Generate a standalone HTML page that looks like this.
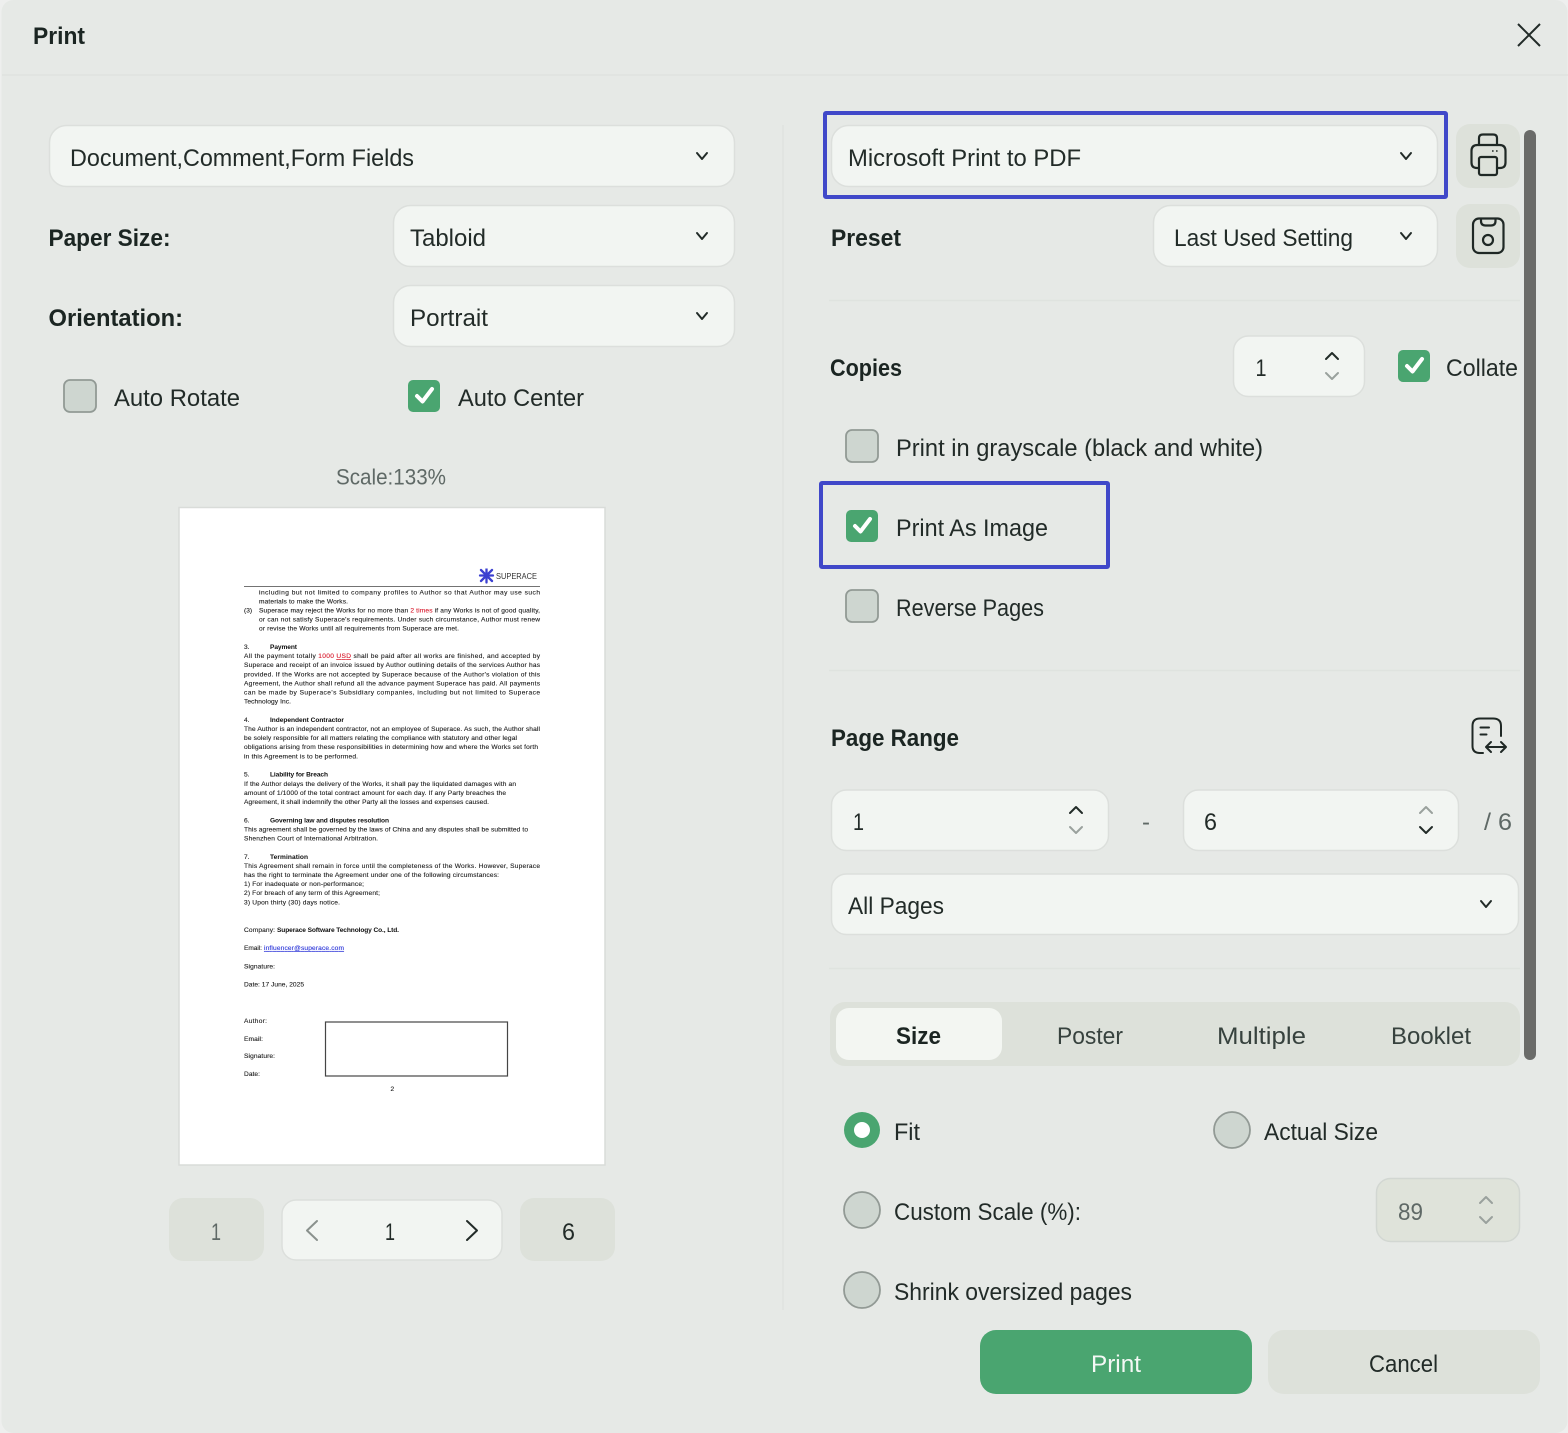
<!DOCTYPE html>
<html lang="en"><head><meta charset="utf-8"><title>Print</title>
<style>
html,body{margin:0;padding:0;width:1568px;height:1433px;overflow:hidden;background:#eeefee}
svg{display:block}
text{font-family:"Liberation Sans",sans-serif}
.t{font-size:24px;fill:#222b28}
.b{font-size:24px;font-weight:700;fill:#1b2522}
.g{font-size:24px;fill:#5f6966}
.d{font-size:6.6px;fill:#1c1c1c;stroke:#1c1c1c;stroke-width:.12}
.db{font-size:6.6px;fill:#111;font-weight:700}
.f{fill:#f2f5f2;stroke:#dcdfdc;stroke-width:1.5}
.bt{fill:#dde1da}
.c{fill:#ced6d0;stroke:#929a95;stroke-width:1.8}
.ck{fill:#4aa570}
.w{fill:none;stroke:#fff;stroke-width:4;stroke-linecap:round;stroke-linejoin:round}
.s{fill:none;stroke:#222b28;stroke-width:2;stroke-linecap:round;stroke-linejoin:round}
.sg{fill:none;stroke:#9aa19d;stroke-width:2;stroke-linecap:round;stroke-linejoin:round}
.i{fill:none;stroke:#1f2825;stroke-width:2.2;stroke-linecap:round;stroke-linejoin:round}
.l{stroke:#dfe3df;stroke-width:1.5}
.bb{fill:none;stroke:#4048c9;stroke-width:4}
</style></head><body>
<svg xmlns="http://www.w3.org/2000/svg" width="1568" height="1433" viewBox="0 0 1568 1433">
<defs><filter id="bl" x="0" y="0" width="1" height="1"><feGaussianBlur stdDeviation="0.3"/></filter></defs>
<rect x="1.5" y="0" width="1566" height="1433" rx="12" fill="#e6e9e6"/>
<line class="l" x1="2" y1="75" x2="1568" y2="75"/>
<line class="l" x1="783" y1="125" x2="783" y2="1310"/>
<text class="b" x="33" y="44" textLength="52" lengthAdjust="spacingAndGlyphs">Print</text>
<path d="M1518 24L1540 46M1540 24L1518 46" fill="none" stroke="#222b28" stroke-width="2"/>

<!-- left fields -->
<rect class="f" x="49.500" y="125.500" width="685" height="61" rx="17"/>
<text class="t" x="70" y="166" textLength="344" lengthAdjust="spacingAndGlyphs">Document,Comment,Form Fields</text>
<path class="s" d="M697 153L702 159L707 153"/>
<text class="b" x="48.500" y="246" textLength="122" lengthAdjust="spacingAndGlyphs">Paper Size:</text>
<rect class="f" x="393.500" y="205.500" width="341" height="61" rx="17"/>
<text class="t" x="410" y="246" textLength="76" lengthAdjust="spacingAndGlyphs">Tabloid</text>
<path class="s" d="M697 233L702 239L707 233"/>
<text class="b" x="48.500" y="326" textLength="134.500" lengthAdjust="spacingAndGlyphs">Orientation:</text>
<rect class="f" x="393.500" y="285.500" width="341" height="61" rx="17"/>
<text class="t" x="410" y="326" textLength="78" lengthAdjust="spacingAndGlyphs">Portrait</text>
<path class="s" d="M697 313L702 319L707 313"/>
<rect class="c" x="64" y="380" width="32" height="32" rx="6"/>
<text class="t" x="114" y="406" textLength="126" lengthAdjust="spacingAndGlyphs">Auto Rotate</text>
<rect class="ck" x="408" y="380" width="32" height="32" rx="5"/>
<path class="w" d="M417 396L422.500 401.500L432 389"/>
<text class="t" x="458" y="406" textLength="126" lengthAdjust="spacingAndGlyphs">Auto Center</text>
<text class="g" x="336" y="484.500" style="font-size:22px" textLength="110" lengthAdjust="spacingAndGlyphs">Scale:133%</text>

<!-- page preview -->
<rect x="179" y="507.500" width="426" height="657.500" fill="#fff" stroke="#d9dcd9" stroke-width="1.500"/>
<g filter="url(#bl)">
<g fill="none" stroke="#3b3fd0" stroke-width="2.300" stroke-linecap="round"><path d="M481 570L492 581M492 570L481 581M486.500 568.500V582.500M480 575.500H493"/></g>
<text x="496" y="579" style="font-size:8px" fill="#333" textLength="41" lengthAdjust="spacingAndGlyphs">SUPERACE</text>
<line x1="244" y1="586.500" x2="540" y2="586.500" stroke="#444" stroke-width=".8"/>
<text class="d" x="259" y="594.300" textLength="281">including but not limited to company profiles to Author so that Author may use such</text>
<text class="d" x="259" y="603.400" textLength="89">materials to make the Works.</text>
<text class="d" x="244" y="612.500">(3)</text>
<text class="d" x="259" y="612.500" textLength="281">Superace may reject the Works for no more than <tspan fill="#d7182a" stroke="#d7182a">2 times</tspan> if any Works is not of good quality,</text>
<text class="d" x="259" y="621.600" textLength="281">or can not satisfy Superace's requirements. Under such circumstance, Author must renew</text>
<text class="d" x="259" y="630.700" textLength="200">or revise the Works until all requirements from Superace are met.</text>
<text class="d" x="244" y="649">3.</text>
<text class="db" x="270" y="649" textLength="27">Payment</text>
<text class="d" x="244" y="658.100" textLength="296">All the payment totally <tspan fill="#d7182a" stroke="#d7182a">1000 <tspan text-decoration="underline">USD</tspan></tspan> shall be paid after all works are finished, and accepted by</text>
<text class="d" x="244" y="667.200" textLength="296">Superace and receipt of an invoice issued by Author outlining details of the services Author has</text>
<text class="d" x="244" y="676.300" textLength="296">provided. If the Works are not accepted by Superace because of the Author's violation of this</text>
<text class="d" x="244" y="685.400" textLength="296">Agreement, the Author shall refund all the advance payment Superace has paid. All payments</text>
<text class="d" x="244" y="694.500" textLength="296">can be made by Superace's Subsidiary companies, including but not limited to Superace</text>
<text class="d" x="244" y="703.600" textLength="47">Technology Inc.</text>
<text class="d" x="244" y="722">4.</text>
<text class="db" x="270" y="722" textLength="74">Independent Contractor</text>
<text class="d" x="244" y="731" textLength="296">The Author is an independent contractor, not an employee of Superace. As such, the Author shall</text>
<text class="d" x="244" y="740.100" textLength="273">be solely responsible for all matters relating the compliance with statutory and other legal</text>
<text class="d" x="244" y="749.200" textLength="294">obligations arising from these responsibilities in determining how and where the Works set forth</text>
<text class="d" x="244" y="758.300" textLength="114">in this Agreement is to be performed.</text>
<text class="d" x="244" y="776.700">5.</text>
<text class="db" x="270" y="776.700" textLength="58">Liability for Breach</text>
<text class="d" x="244" y="785.800" textLength="272">If the Author delays the delivery of the Works, it shall pay the liquidated damages with an</text>
<text class="d" x="244" y="794.900" textLength="262">amount of 1/1000 of the total contract amount for each day. If any Party breaches the</text>
<text class="d" x="244" y="804" textLength="245">Agreement, it shall indemnify the other Party all the losses and expenses caused.</text>
<text class="d" x="244" y="822.300">6.</text>
<text class="db" x="270" y="822.300" textLength="119">Governing law and disputes resolution</text>
<text class="d" x="244" y="831.400" textLength="284">This agreement shall be governed by the laws of China and any disputes shall be submitted to</text>
<text class="d" x="244" y="840.500" textLength="134">Shenzhen Court of International Arbitration.</text>
<text class="d" x="244" y="858.800">7.</text>
<text class="db" x="270" y="858.800" textLength="38">Termination</text>
<text class="d" x="244" y="867.900" textLength="296">This Agreement shall remain in force until the completeness of the Works. However, Superace</text>
<text class="d" x="244" y="877" textLength="255">has the right to terminate the Agreement under one of the following circumstances:</text>
<text class="d" x="244" y="886.100" textLength="120">1) For inadequate or non-performance;</text>
<text class="d" x="244" y="895.200" textLength="136">2) For breach of any term of this Agreement;</text>
<text class="d" x="244" y="904.300" textLength="96">3)  Upon thirty (30) days notice.</text>
<text class="d" x="244" y="932" textLength="31">Company:</text>
<text class="db" x="277" y="932" textLength="122">Superace Software Technology Co., Ltd.</text>
<text class="d" x="244" y="950" textLength="18">Email:</text>
<text class="d" x="264" y="950" textLength="80" style="fill:#2b35d8;stroke:#2b35d8" text-decoration="underline">influencer@superace.com</text>
<text class="d" x="244" y="968.500" textLength="31">Signature:</text>
<text class="d" x="244" y="986.500" textLength="60">Date: 17 June, 2025</text>
<text class="d" x="244" y="1023" textLength="23">Author:</text>
<text class="d" x="244" y="1041" textLength="19">Email:</text>
<text class="d" x="244" y="1058" textLength="31">Signature:</text>
<text class="d" x="244" y="1076" textLength="16">Date:</text>
<rect x="325.500" y="1022" width="182" height="54" fill="#fff" stroke="#444" stroke-width="1.200"/>
<text class="d" x="390.500" y="1091">2</text>
</g>

<!-- pager -->
<rect class="bt" x="169" y="1198" width="95" height="63" rx="14"/>
<text class="g" x="211" y="1240" textLength="10" lengthAdjust="spacingAndGlyphs">1</text>
<rect class="f" x="282" y="1200" width="220" height="60" rx="14"/>
<path class="sg" style="stroke-width:2;stroke:#8a918d" d="M317 1221L307 1230.500L317 1240"/>
<text class="t" x="385" y="1240" textLength="10" lengthAdjust="spacingAndGlyphs">1</text>
<path class="s" d="M467 1221L477 1230.500L467 1240"/>
<rect class="bt" x="520" y="1198" width="95" height="63" rx="14"/>
<text class="t" x="562" y="1240" textLength="13" lengthAdjust="spacingAndGlyphs">6</text>

<!-- right: printer -->
<rect class="f" x="831.500" y="125.500" width="606" height="61" rx="17"/>
<rect class="bb" x="825" y="113" width="621" height="84" rx="1"/>
<text class="t" x="848" y="166" textLength="233" lengthAdjust="spacingAndGlyphs">Microsoft Print to PDF</text>
<path class="s" d="M1401 153L1406 159L1411 153"/>
<rect class="bt" x="1456" y="124" width="64" height="64" rx="14"/>
<path class="i" d="M1479 145V138Q1479 134.500 1483 134.500H1493Q1497 134.500 1497 138V145"/>
<path class="i" d="M1479 168H1477Q1471.500 168 1471.500 162.500V151Q1471.500 145 1477.500 145H1499.500Q1505.500 145 1505.500 151V162.500Q1505.500 168 1500 168H1497"/>
<rect class="i" x="1479" y="157" width="18" height="18" rx="2"/>
<path d="M1492 151h1.600M1496 151h1.600" stroke="#1f2825" stroke-width="1.600" fill="none"/>

<text class="b" x="831" y="246" textLength="70" lengthAdjust="spacingAndGlyphs">Preset</text>
<rect class="f" x="1153.500" y="205.500" width="284" height="61" rx="17"/>
<text class="t" x="1174" y="246" textLength="179" lengthAdjust="spacingAndGlyphs">Last Used Setting</text>
<path class="s" d="M1401 233L1406 239L1411 233"/>
<rect class="bt" x="1456" y="204" width="64" height="64" rx="14"/>
<rect class="i" x="1473" y="218.500" width="30.500" height="34.500" rx="6"/>
<path class="i" d="M1481 219V221Q1481 225.500 1485.500 225.500H1491Q1495.500 225.500 1495.500 221V219"/>
<circle class="i" cx="1488" cy="240" r="5"/>
<line class="l" x1="829" y1="300.500" x2="1520" y2="300.500"/>

<!-- copies -->
<text class="b" x="830" y="376" textLength="72" lengthAdjust="spacingAndGlyphs">Copies</text>
<rect class="f" x="1233.500" y="336" width="131" height="60.500" rx="15"/>
<text class="t" x="1255.500" y="376" textLength="11" lengthAdjust="spacingAndGlyphs">1</text>
<path class="s" d="M1326 359L1332 353L1338 359"/>
<path class="sg" d="M1326 373L1332 379L1338 373"/>
<rect class="ck" x="1398" y="350" width="32" height="32" rx="5"/>
<path class="w" d="M1407 366L1412.500 371.500L1422 359"/>
<text class="t" x="1446" y="376" textLength="72" lengthAdjust="spacingAndGlyphs">Collate</text>

<rect class="c" x="846" y="430" width="32" height="32" rx="6"/>
<text class="t" x="896" y="456" textLength="367" lengthAdjust="spacingAndGlyphs">Print in grayscale (black and white)</text>
<rect class="bb" x="821" y="483" width="287" height="84" rx="1"/>
<rect class="ck" x="846" y="510" width="32" height="32" rx="5"/>
<path class="w" d="M855 526L860.500 531.500L870 519"/>
<text class="t" x="896" y="536" textLength="152" lengthAdjust="spacingAndGlyphs">Print As Image</text>
<rect class="c" x="846" y="590" width="32" height="32" rx="6"/>
<text class="t" x="896" y="616" textLength="148" lengthAdjust="spacingAndGlyphs">Reverse Pages</text>
<line class="l" x1="829" y1="670.500" x2="1520" y2="670.500"/>

<!-- page range -->
<text class="b" x="831" y="746" textLength="128" lengthAdjust="spacingAndGlyphs">Page Range</text>
<path class="i" style="stroke-width:2" d="M1501 736V726Q1501 718.500 1493 718.500H1480Q1472.500 718.500 1472.500 726V746Q1472.500 753 1480 753H1483"/>
<path class="i" style="stroke-width:2" d="M1480.500 727.500H1489M1480.500 734.500H1486.500"/>
<path class="i" style="stroke-width:2" d="M1486 747H1506M1491 742L1486 747L1491 752M1501 742L1506 747L1501 752"/>
<rect class="f" x="831.500" y="790" width="277" height="60.500" rx="15"/>
<text class="t" x="853" y="830" textLength="11" lengthAdjust="spacingAndGlyphs">1</text>
<path class="s" d="M1070 813L1076 807L1082 813"/>
<path class="sg" d="M1070 827L1076 833L1082 827"/>
<text class="g" x="1142" y="830" textLength="8" lengthAdjust="spacingAndGlyphs">-</text>
<rect class="f" x="1183.500" y="790" width="275" height="60.500" rx="15"/>
<text class="t" x="1204" y="830" textLength="13" lengthAdjust="spacingAndGlyphs">6</text>
<path class="sg" d="M1420 813L1426 807L1432 813"/>
<path class="s" d="M1420 827L1426 833L1432 827"/>
<text class="g" x="1484" y="830" textLength="28" lengthAdjust="spacingAndGlyphs">/ 6</text>
<rect class="f" x="831.500" y="874" width="687" height="60.500" rx="15"/>
<text class="t" x="848" y="914" textLength="96" lengthAdjust="spacingAndGlyphs">All Pages</text>
<path class="s" d="M1481 901L1486 907L1491 901"/>
<line class="l" x1="829" y1="968.500" x2="1520" y2="968.500"/>

<!-- tabs -->
<rect class="bt" x="830" y="1002" width="690" height="64" rx="15"/>
<rect x="836" y="1008" width="166" height="52" rx="13" fill="#f3f6f2"/>
<text class="b" x="896" y="1044" textLength="45" lengthAdjust="spacingAndGlyphs">Size</text>
<text class="t" x="1057" y="1044" style="fill:#37423e" textLength="66" lengthAdjust="spacingAndGlyphs">Poster</text>
<text class="t" x="1217" y="1044" style="fill:#37423e" textLength="89" lengthAdjust="spacingAndGlyphs">Multiple</text>
<text class="t" x="1391" y="1044" style="fill:#37423e" textLength="80" lengthAdjust="spacingAndGlyphs">Booklet</text>

<!-- scale -->
<circle cx="862" cy="1130" r="18" fill="#4aa570"/><circle cx="862" cy="1130" r="8" fill="#fff"/>
<text class="t" x="894" y="1140" textLength="26" lengthAdjust="spacingAndGlyphs">Fit</text>
<circle class="c" cx="1232" cy="1130" r="18"/>
<text class="t" x="1264" y="1140" textLength="114" lengthAdjust="spacingAndGlyphs">Actual Size</text>
<circle class="c" cx="862" cy="1210" r="18"/>
<text class="t" x="894" y="1220" textLength="187" lengthAdjust="spacingAndGlyphs">Custom Scale (%):</text>
<rect x="1376.500" y="1178.500" width="143" height="63" rx="14" fill="#dfe3da" stroke="#d2d7d2" stroke-width="1.500"/>
<text class="g" x="1398" y="1220" textLength="25" lengthAdjust="spacingAndGlyphs">89</text>
<path class="sg" d="M1480 1203L1486 1197L1492 1203"/>
<path class="sg" d="M1480 1217L1486 1223L1492 1217"/>
<circle class="c" cx="862" cy="1290" r="18"/>
<text class="t" x="894" y="1300" textLength="238" lengthAdjust="spacingAndGlyphs">Shrink oversized pages</text>

<!-- scrollbar -->
<rect x="1524" y="130" width="12" height="930" rx="6" fill="#6a6b69"/>

<!-- buttons -->
<rect x="980" y="1330" width="272" height="64" rx="16" fill="#4aa570"/>
<text class="t" x="1091" y="1372" style="fill:#f4f8f5" textLength="50" lengthAdjust="spacingAndGlyphs">Print</text>
<rect class="bt" x="1268" y="1330" width="272" height="64" rx="16"/>
<text class="t" x="1369" y="1372" textLength="69" lengthAdjust="spacingAndGlyphs">Cancel</text>
</svg>
</body></html>
